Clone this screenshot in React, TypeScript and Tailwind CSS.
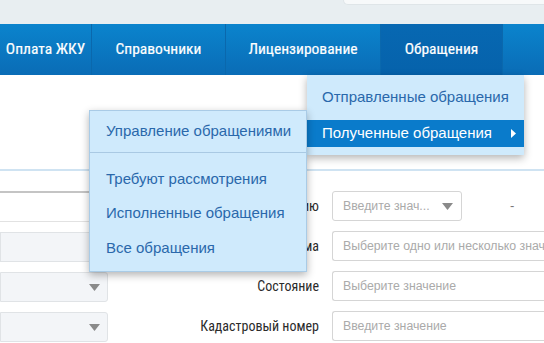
import React from "react";

const narrow = { fontFamily: '"Liberation Sans Narrow", "Roboto Condensed", "Arial Narrow", Roboto, sans-serif' };

function Caret() {
  return (
    <svg width="11" height="7" viewBox="0 0 11 7" className="shrink-0">
      <path d="M0 0 L11 0 L5.5 7 Z" fill="#8a8a8a" />
    </svg>
  );
}

export default function App() {
  return (
    <div className="relative w-[544px] h-[343px] overflow-hidden bg-white" style={{ fontFamily: '"Liberation Sans", Arial, sans-serif' }}>
      {/* top band */}
      <div className="h-[24px] bg-[#e8eef1] flex justify-end">
        <div className="w-[201px] h-[5px] bg-[#f7f9fa] rounded-bl-[5px] border-b border-l border-[#dfe5e8]" />
      </div>

      {/* nav */}
      <div className="h-[51px] flex bg-gradient-to-b from-[#0b84cd] to-[#0a6cb6] text-white text-[15.5px] [-webkit-text-stroke:0.2px_white]" style={narrow}>
        <div className="w-[92px] shrink-0 flex items-center justify-center border-r border-[#0a68ad]">Оплата ЖКУ</div>
        <div className="w-[134px] shrink-0 flex items-center justify-center border-r border-[#0a68ad]">Справочники</div>
        <div className="w-[155px] shrink-0 flex items-center justify-center border-r border-[#0a68ad]">Лицензирование</div>
        <div className="w-[121px] shrink-0 flex items-center justify-center bg-gradient-to-b from-[#0768b2] to-[#0662ab]">Обращения</div>
        <div className="flex-1 border-l border-[#0a68ad]" />
      </div>

      {/* content */}
      <div className="h-[94px]" />
      <div className="h-[2px] bg-[#cfe3f2]" />
      <div className="flex pt-[20px]">
        <div className="w-[108px] shrink-0 flex flex-col gap-[10px]">
          <div className="h-[31px] bg-white border-t-2 border-b border-[#c4c4c4] border-b-[#e2e2e2]" />
          <div className="h-[30px] bg-[#f3f5f8] border border-[#e0e3e6]" />
          <div className="h-[30px] bg-[#f3f5f8] border border-[#e0e3e6] rounded-r-[3px] flex items-center justify-end pr-[7px]">
            <Caret />
          </div>
          <div className="h-[30px] bg-[#f3f5f8] border border-[#e0e3e6] rounded-r-[3px] flex items-center justify-end pr-[7px]">
            <Caret />
          </div>
        </div>
        <div className="flex-1 min-w-0 flex flex-col gap-[10px]">
          {[
            { label: "Поиск по значению", first: true },
            { label: "Тип дома", text: "Выберите одно или несколько значений" },
            { label: "Состояние", text: "Выберите значение" },
            { label: "Кадастровый номер", text: "Введите значение" },
          ].map((r, i) => (
            <div key={i} className="h-[30px] flex items-center">
              <div className="w-[224px] shrink-0 text-right text-[14px] text-[#2b2b2b] pr-[13px] whitespace-nowrap" style={narrow}>{r.label}</div>
              {r.first ? (
                <>
                  <div className="w-[130px] shrink-0 h-[30px] border border-[#d5d5d5] rounded-[3px] flex items-center pl-[10px] pr-[8px] text-[12.3px] text-[#aaa]">
                    <span className="flex-1">Введите знач...</span>
                    <Caret />
                  </div>
                  <div className="ml-[48px] text-[13px] text-[#777]">-</div>
                </>
              ) : (
                <div className="flex-1 min-w-0 h-[30px] border border-r-0 border-[#d5d5d5] rounded-l-[3px] flex items-center pl-[10px] text-[12.3px] text-[#aaa] whitespace-nowrap overflow-hidden">
                  {r.text}
                </div>
              )}
            </div>
          ))}
        </div>
      </div>

      {/* dropdown from Обращения */}
      <div className="absolute left-[307px] top-[75px] w-[217px] h-[80px] bg-[#cfeafc] shadow-[0_3px_8px_rgba(0,0,0,0.3)] text-[15px]">
        <div className="h-[45px] flex items-center pl-[15px] text-[#2a68ab]">Отправленные обращения</div>
        <div className="h-[27px] bg-[#0a7bcb] text-white flex items-center pl-[15px] pr-[8px]">
          <span className="flex-1">Полученные обращения</span>
          <svg width="5" height="9" viewBox="0 0 5 9"><path d="M0 0 L5 4.5 L0 9 Z" fill="#fff" /></svg>
        </div>
      </div>

      {/* submenu */}
      <div className="absolute left-[89px] top-[110px] w-[218px] h-[162px] bg-[#cfeafc] border border-[#a9cbe6] shadow-[0_3px_8px_rgba(0,0,0,0.3)] text-[15px] text-[#2a68ab]">
        <div className="h-[42px] flex items-center pl-[16px] border-b border-[#a9c9e3]">Управление обращениями</div>
        <div className="pt-[9px] flex flex-col">
          <div className="h-[34px] flex items-center pl-[16px]">Требуют рассмотрения</div>
          <div className="h-[35px] flex items-center pl-[16px]">Исполненные обращения</div>
          <div className="h-[35px] flex items-center pl-[16px]">Все обращения</div>
        </div>
      </div>
    </div>
  );
}
